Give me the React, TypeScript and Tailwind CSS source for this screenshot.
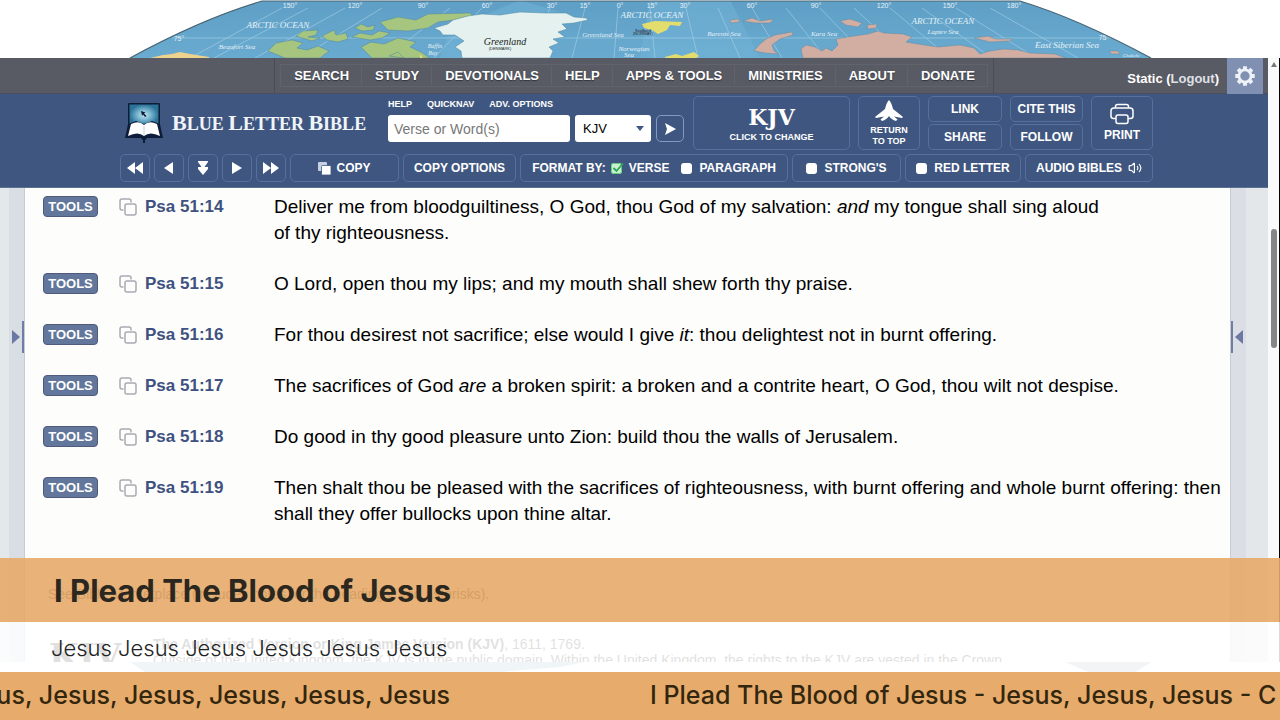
import { useState } from 'react';
import type { ReactNode } from 'react';
import { Volume2 } from 'lucide-react';

const NAV_ITEMS = ['SEARCH', 'STUDY', 'DEVOTIONALS', 'HELP', 'APPS & TOOLS', 'MINISTRIES', 'ABOUT', 'DONATE'];

interface Verse {
  id: string;
  text: ReactNode;
}

const VERSES: Verse[] = [
  {
    id: '51:14',
    text: (
      <>
        Deliver me from bloodguiltiness, O God, thou God of my salvation: <em>and</em> my tongue shall sing aloud
        <br />
        of thy righteousness.
      </>
    ),
  },
  { id: '51:15', text: 'O Lord, open thou my lips; and my mouth shall shew forth thy praise.' },
  {
    id: '51:16',
    text: (
      <>
        For thou desirest not sacrifice; else would I give <em>it</em>: thou delightest not in burnt offering.
      </>
    ),
  },
  {
    id: '51:17',
    text: (
      <>
        The sacrifices of God <em>are</em> a broken spirit: a broken and a contrite heart, O God, thou wilt not despise.
      </>
    ),
  },
  { id: '51:18', text: 'Do good in thy good pleasure unto Zion: build thou the walls of Jerusalem.' },
  {
    id: '51:19',
    text: 'Then shalt thou be pleased with the sacrifices of righteousness, with burnt offering and whole burnt offering: then shall they offer bullocks upon thine altar.',
  },
];

/* World map strip behind the page */
function WorldMap() {
  const lines = [
    'M282 8L190 58', 'M308 8L214 58', 'M345 8L255 58', 'M382 8L300 58', 'M450 8L385 58', 'M482 8L434 58',
    'M550 8L530 58', 'M585 8L572 58', 'M618 8L614 58', 'M650 8L655 58', 'M686 8L698 58', 'M718 8L740 58',
    'M752 8L782 58', 'M786 8L826 58', 'M820 8L868 58', 'M854 8L908 58', 'M890 8L950 58', 'M922 8L992 58',
    'M956 8L1036 58', 'M990 8L1078 58', 'M172 38H1110',
  ];
  const degrees: [number, string][] = [
    [290, '150°'], [355, '120°'], [423, '90°'], [487, '60°'], [552, '30°'], [585, '15°'], [620, '0°'],
    [652, '15°'], [685, '30°'], [752, '60°'], [816, '90°'], [884, '120°'], [950, '150°'], [1014, '180°'],
  ];

  return (
    <svg viewBox="0 0 1280 58" preserveAspectRatio="xMidYMin slice" className="block h-[58px] w-full shrink-0" aria-label="World map">
      <defs>
        <linearGradient id="sea" x1="0" x2="0" y1="0" y2="1">
          <stop offset="0" stopColor="#5f9fc6" />
          <stop offset="1" stopColor="#6aabd0" />
        </linearGradient>
        <clipPath id="globe">
          <path d="M130 58C172 35 215 15 262 1H1020C1066 15 1110 36 1151 58Z" />
        </clipPath>
      </defs>
      <g clipPath="url(#globe)">
        <rect width="1280" height="58" fill="url(#sea)" />
        <path d="M520 0L560 12L545 58H440L450 30Z M650 0H730L760 58H640Z" fill="#74b4d8" opacity=".5" />
        <g stroke="#a9d0e4" strokeWidth=".8" opacity=".75">
          {lines.map((d) => (
            <path key={d} d={d} />
          ))}
        </g>
        {/* Alaska */}
        <path d="M150 58L163 55L172 54L180 52L190 54L209 57V58Z" fill="#eed38c" />
        {/* Canadian islands */}
        <g fill="#a6c57f" stroke="#4f87a0" strokeWidth=".5">
          <path d="M268 51L276 43L292 40L303 43L297 48L307 50L318 46L329 51L320 58H285Z" />
          <path d="M296 36L303 31L318 30L316 35L308 37L320 38L312 41Z" />
          <path d="M322 36L334 30L336 35L346 33L348 39L338 42L327 40Z" />
          <path d="M355 28L361 24L368 27L375 25L373 30L362 31Z" />
          <path d="M352 37L360 33L372 35L379 31L390 33L382 38L370 40Z" />
          <path d="M361 47L371 42L384 44L398 38L416 42L410 47L421 52L430 58H372Z" />
          <path d="M380 22L398 17L416 20L428 14L470 13L473 16L455 20L438 22L428 28L408 31L388 30Z" />
          <path d="M389 56L398 52L404 58Z" />
        </g>
        {/* Greenland */}
        <path
          d="M434 28L448 24L453 20L468 16L482 14L500 15L520 12L545 13L566 13L574 17L586 18L588 20L574 23L562 24L567 29L558 32L565 37L553 39L559 43L549 47L553 51L550 58H462L461 51L455 47L464 41L455 35L443 35L440 31Z"
          fill="#e4f1ee"
          stroke="#4f87a0"
          strokeWidth=".5"
        />
        {/* Svalbard and Iceland */}
        <path d="M642 24L655 21L682 22L680 26L670 25L667 30L658 34L652 30L644 28Z" fill="#e3dd6d" />
        <path d="M665 57L676 54L682 56L694 52L699 56L696 58H665Z" fill="#e3dd6d" />
        <path d="M420 58V54L423 58Z" fill="#e3dd6d" />
        {/* Russian islands and Siberia */}
        <g fill="#d2ada2" stroke="#4f87a0" strokeWidth=".4">
          <path d="M730 20L738 19L740 22L731 23Z" />
          <path d="M743 21L752 18L760 21L774 19L770 23L756 23Z" />
          <path d="M754 51L759 45L766 39L775 35L792 32L793 35L780 39L772 45L774 51L779 54L765 53Z" />
          <path d="M840 21L850 19L862 23L858 27L846 25Z M867 25L877 24L876 28L868 29Z" />
          <path d="M801 49L806 45L815 47L822 51L826 48L832 51L838 45L836 39L854 36L868 34L878 31L884 33L903 34L912 37L906 42L918 44L938 47L960 45L974 48L980 54L990 51L1004 49L1018 50L1030 53L1055 54L1066 58H803Z" />
          <path d="M974 38L988 36L996 39L1012 39L1010 41L990 42Z M1109 51L1118 51L1120 54L1112 54Z" />
        </g>
        <g fill="#e4f1f6" fontFamily="Liberation Sans" fontSize="7" textAnchor="middle">
          {degrees.map(([x, label]) => (
            <text key={x} x={x} y="8">
              {label}
            </text>
          ))}
          <text x="179" y="41">75°</text>
          <text x="1104" y="40">75°</text>
        </g>
        <g fill="#e4f1f6" fontFamily="Liberation Serif" fontStyle="italic" textAnchor="middle">
          <text x="278" y="28" fontSize="9">ARCTIC  OCEAN</text>
          <text x="237" y="49" fontSize="7">Beaufort Sea</text>
          <text x="435" y="48" fontSize="6">Baffin</text>
          <text x="433" y="55" fontSize="6">Bay</text>
          <text x="603" y="37" fontSize="7">Greenland  Sea</text>
          <text x="634" y="51" fontSize="7">Norwegian</text>
          <text x="629" y="57" fontSize="7">Sea</text>
          <text x="652" y="18" fontSize="9">ARCTIC  OCEAN</text>
          <text x="724" y="36" fontSize="7">Barents Sea</text>
          <text x="824" y="36" fontSize="7">Kara Sea</text>
          <text x="943" y="24" fontSize="9">ARCTIC  OCEAN</text>
          <text x="943" y="34" fontSize="7">Laptev Sea</text>
          <text x="1067" y="48" fontSize="9">East Siberian Sea</text>
          <text x="1131" y="57" fontSize="5">Chukchi</text>
        </g>
        <g fill="#222" textAnchor="middle">
          <text x="505" y="45" fontSize="10" fontFamily="Liberation Serif" fontStyle="italic">Greenland</text>
          <text x="500" y="50" fontSize="4" fontFamily="Liberation Sans">(DENMARK)</text>
          <text x="643" y="32" fontSize="4" fontFamily="Liberation Sans">Svalbard</text>
          <text x="643" y="35" fontSize="4" fontFamily="Liberation Sans">(NORWAY)</text>
        </g>
      </g>
      <path d="M130 58C172 35 215 15 262 1H1020C1066 15 1110 36 1151 58" fill="none" stroke="#4a6675" strokeWidth="1.2" />
    </svg>
  );
}

function GearIcon() {
  return (
    <svg viewBox="0 0 24 24" className="h-[22px] w-[22px]" fill="none" stroke="#eef1f6">
      <circle cx="12" cy="12" r="6.6" strokeWidth="3" />
      <g strokeWidth="4.4">
        {[0, 45, 90, 135, 180, 225, 270, 315].map((a) => (
          <path key={a} d="M12 4.6V1.4" transform={`rotate(${a} 12 12)`} />
        ))}
      </g>
    </svg>
  );
}

function BibleLogo() {
  return (
    <svg viewBox="0 0 40 42" className="h-[42px] w-10" aria-hidden="true">
      <defs>
        <radialGradient id="screen">
          <stop offset="0" stopColor="#c4e6f0" />
          <stop offset=".5" stopColor="#74b3cd" />
          <stop offset="1" stopColor="#2c7198" />
        </radialGradient>
      </defs>
      <rect x="4" y="1" width="32" height="24" rx="1" fill="#0d1c38" />
      <rect x="5.5" y="2.5" width="29" height="21" fill="url(#screen)" />
      <path d="M17 9l4.500 1.500-1.500 1 2.500 2.500-1.500 1-2-2.500-1 1.500z" fill="#0d1c38" />
      <path d="M4 22L1 36L17 36Q18 38 19 38V41H21V38Q22 38 23 36L39 36L36 22L28 19L20 22L12 19Z" fill="#0d1c38" />
      <path d="M7 22Q15 18 20 23Q25 18 33 22L36 34Q26 29 20 34Q14 29 4 34Z" fill="#fff" />
      <path d="M20 24V33" stroke="#b5c6d2" strokeWidth=".8" />
    </svg>
  );
}

function PrinterIcon() {
  return (
    <svg viewBox="0 0 24 22" className="h-[22px] w-6" fill="none" stroke="#fff" strokeWidth="1.5" strokeLinejoin="round">
      <path d="M5.5 5V3.5Q5.5 1.5 7.5 1.5H16.5Q18.5 1.5 18.5 3.5V5" />
      <path d="M6 15.5H3.5Q1 15.5 1 13V8Q1 5 4 5H20Q23 5 23 8V13Q23 15.5 20.5 15.5H18" />
      <rect x="6" y="12" width="12" height="8.5" rx="2" />
    </svg>
  );
}

/* Double-square glyph used beside every verse */
function CopyOutline() {
  return (
    <svg viewBox="0 0 18 18" className="h-[18px] w-[18px]" fill="none" stroke="#a9abb2" strokeWidth="1.5">
      <path d="M4.5 12H3Q1 12 1 10V3Q1 1 3 1H10Q12 1 12 3V4.5" />
      <rect x="6" y="6" width="11" height="11" rx="2" />
    </svg>
  );
}

const BOX = 'flex items-center justify-center rounded-[5px] border border-[#55709c] hover:bg-[#4a648f]';

function ArrowButton({ label, path }: { label: string; path: string }) {
  return (
    <button aria-label={label} className={`${BOX} w-[30px]`}>
      <svg viewBox="0 0 16 14" className="h-[14px] w-4" fill="#fff">
        <path d={path} />
      </svg>
    </button>
  );
}

function CheckOption({ label, checked, onChange }: { label: string; checked: boolean; onChange: () => void }) {
  return (
    <label className="flex items-center gap-[7px]">
      <span className="relative flex">
        <input
          type="checkbox"
          checked={checked}
          onChange={onChange}
          className="h-[11px] w-[11px] appearance-none rounded-[3px] bg-white checked:bg-[#c9f2d0]"
        />
        {checked && (
          <svg viewBox="0 0 13 12" className="pointer-events-none absolute -top-px left-0 h-3 w-[13px]" fill="none">
            <rect x=".5" y="1.5" width="10" height="10" rx="2" stroke="#5fd07c" />
            <path d="M2.5 6L5.5 9L12 1.5" stroke="#2fa653" strokeWidth="1.8" />
          </svg>
        )}
      </span>
      {label}
    </label>
  );
}

function TopNav() {
  return (
    <nav className="relative flex h-9 shrink-0 justify-center border-b border-[#4b4f5c] bg-[#585a64]">
      <div className="border-x border-[#4a4c56] px-[5px] py-[6px]">
        <ul className="flex h-[23px] items-center border border-[#60626c] text-[13px] font-bold text-white">
          {NAV_ITEMS.map((item) => (
            <li key={item} className="border-l border-[#60626c] pr-3 pl-[13px] first:border-l-0">
              <a href="#" className="[text-shadow:0_1px_1px_#33353d]">{item}</a>
            </li>
          ))}
        </ul>
      </div>
      <div className="absolute inset-y-0 right-[5px] flex">
        <p className="pt-[13px] pr-2 text-[13px] leading-4 font-bold text-white">
          Static (<a href="#" className="text-[#dfe1e6]">Logout</a>)
        </p>
        <button aria-label="Settings" className="flex h-9 w-9 items-center justify-center bg-[#8090b3]">
          <GearIcon />
        </button>
      </div>
    </nav>
  );
}

function ToolHeader() {
  const [format, setFormat] = useState('verse');
  const [strongs, setStrongs] = useState(false);
  const [redLetter, setRedLetter] = useState(false);

  return (
    <header className="flex h-[94px] shrink-0 justify-center border-b border-[#5c6f92] bg-[#3f5780] pt-[2px] pl-[5px] text-xs font-bold text-white">
      <div className="w-[1033px]">
        <div className="flex h-[54px] gap-2">
          <a href="#" className="flex w-[260px] items-center gap-2 pl-1">
            <BibleLogo />
            <span className="font-['Liberation_Serif',serif] text-[18px] whitespace-nowrap text-[#f1f5fa]">
              <span className="text-[22px]">B</span>LUE <span className="text-[22px]">L</span>ETTER{' '}
              <span className="text-[22px]">B</span>IBLE
            </span>
          </a>
          <form className="w-[297px]" onSubmit={(e) => e.preventDefault()}>
            <div className="flex gap-[15px] pt-[2px] pb-[5px] text-[9px] leading-3">
              <a href="#">HELP</a>
              <a href="#">QUICKNAV</a>
              <a href="#">ADV. OPTIONS</a>
            </div>
            <div className="flex gap-[5px]">
              <input
                aria-label="Verse or Word(s)"
                placeholder="Verse or Word(s)"
                className="h-[27px] w-[182px] rounded-[3px] bg-white px-[6px] text-[14px] font-normal text-black placeholder:text-[#777]"
              />
              <div className="relative">
                <select aria-label="Translation" className="h-[27px] w-[76px] appearance-none rounded-[3px] bg-white px-2 text-[13px] font-normal text-black">
                  <option>KJV</option>
                </select>
                <svg viewBox="0 0 8 5" className="pointer-events-none absolute top-[11px] right-[7px] h-[5px] w-2" fill="#41568a">
                  <path d="M0 0H8L4 5Z" />
                </svg>
              </div>
              <button aria-label="Go" className="flex h-[27px] w-7 items-center justify-center rounded-[5px] border border-[#8398c4]">
                <svg viewBox="0 0 11 12" className="h-3 w-[11px]" fill="#fff">
                  <path d="M0 0L11 6L0 12L2 6Z" />
                </svg>
              </button>
            </div>
          </form>
          <button className={`${BOX} w-[157px] flex-col pt-[3px]`}>
            <span className="font-['DejaVu_Serif',serif] text-[22px] leading-6">KJV</span>
            <span className="text-[9px] leading-4">CLICK TO CHANGE</span>
          </button>
          <button className={`${BOX} w-[62px] flex-col text-[9px] leading-[11px]`}>
            <svg viewBox="0 0 28 21" className="mb-1 h-[21px] w-7" fill="#fff">
              <path d="M14 0C16 2 17 5 18 9L28 17L27 18L19 16.500L22.500 19.500L21 21C18 20 15.500 18.500 14 16C12.500 18.500 10 20 7 21L5.500 19.500L9 16.500L1 18L0 17L10 9C11 5 12 2 14 0Z" />
            </svg>
            RETURN
            <br />
            TO TOP
          </button>
          <div className="flex w-[74px] flex-col gap-[2px]">
            <button className={`${BOX} flex-1`}>LINK</button>
            <button className={`${BOX} flex-1`}>SHARE</button>
          </div>
          <div className="flex w-[73px] flex-col gap-[2px]">
            <button className={`${BOX} flex-1`}>CITE THIS</button>
            <button className={`${BOX} flex-1`}>FOLLOW</button>
          </div>
          <button className={`${BOX} w-[62px] flex-col gap-[2px]`}>
            <PrinterIcon />
            PRINT
          </button>
        </div>

        <div className="mt-1 flex h-7 gap-1">
          <ArrowButton label="First chapter" path="M8 1V13L0 7ZM16 1V13L8 7Z" />
          <ArrowButton label="Previous chapter" path="M12 1V13L3 7Z" />
          <ArrowButton label="Scroll down" path="M3 0H13V1L9.500 6H13V8L8 14L3 8V6H6.500L3 1Z" />
          <ArrowButton label="Next chapter" path="M3 1V13L13 7Z" />
          <ArrowButton label="Last chapter" path="M0 1V13L8 7ZM8 1V13L16 7Z" />
          <button className={`${BOX} w-[109px] gap-[5px]`}>
            <svg viewBox="0 0 13 13" className="h-[13px] w-[13px]">
              <rect width="9" height="9" rx="1" fill="#c6d0e2" />
              <rect x="3.5" y="3.5" width="9.5" height="9.5" rx="1" fill="#fff" stroke="#3f5780" strokeWidth=".8" />
            </svg>
            COPY
          </button>
          <button className={`${BOX} w-[113px]`}>COPY OPTIONS</button>
          <fieldset className={`${BOX} w-[268px] gap-3`}>
            <div className="flex items-center gap-[5px]">
              <span>FORMAT BY:</span>
              <CheckOption label="VERSE" checked={format === 'verse'} onChange={() => setFormat('verse')} />
            </div>
            <CheckOption label="PARAGRAPH" checked={format === 'paragraph'} onChange={() => setFormat('paragraph')} />
          </fieldset>
          <div className={`${BOX} w-[109px]`}>
            <CheckOption label="STRONG'S" checked={strongs} onChange={() => setStrongs(!strongs)} />
          </div>
          <div className={`${BOX} w-[116px]`}>
            <CheckOption label="RED LETTER" checked={redLetter} onChange={() => setRedLetter(!redLetter)} />
          </div>
          <button className={`${BOX} w-[128px] gap-[6px]`}>
            AUDIO BIBLES
            <Volume2 className="h-[14px] w-[14px]" strokeWidth={2} />
          </button>
        </div>
      </div>
    </header>
  );
}

function PanelHandle({ side }: { side: 'left' | 'right' }) {
  return (
    <button
      aria-label={`Open ${side} panel`}
      className={`absolute top-[133px] flex h-8 w-3 items-center ${
        side === 'left' ? 'right-0 justify-start border-r-2 border-[#6f7ea5]' : 'left-0 justify-end border-l-2 border-[#6f7ea5]'
      }`}
    >
      <svg viewBox="0 0 8 14" className="h-[14px] w-2" fill="#6b78a3">
        <path d={side === 'left' ? 'M0 0V14L8 7Z' : 'M8 0V14L0 7Z'} />
      </svg>
    </button>
  );
}

function VerseRow({ verse }: { verse: Verse }) {
  return (
    <li className="flex items-start">
      <button className="mt-[2px] h-[21px] w-[55px] shrink-0 rounded-[4px] border border-[#505b7c] bg-[#62779b] text-[13px] leading-[19px] font-bold text-white">
        TOOLS
      </button>
      <button aria-label={`Copy Psa ${verse.id}`} className="mt-1 ml-[21px] shrink-0">
        <CopyOutline />
      </button>
      <a href="#" className="ml-2 w-[129px] shrink-0 text-[17px] leading-[26px] font-bold text-[#3e5180]">
        Psa {verse.id}
      </a>
      <p className="text-[19px] leading-[26px] text-black">{verse.text}</p>
    </li>
  );
}

function Reader() {
  return (
    <main className="flex min-h-0 flex-1">
      <div className="flex w-6 shrink-0 bg-[#e3e8ea]">
        <div className="relative ml-[9px] flex-1 bg-[#d9dee4]">
          <PanelHandle side="left" />
        </div>
      </div>
      <article className="min-w-0 flex-1 overflow-hidden border-x border-[#c6ccd4] bg-[#fdfdfc] pt-[6px] pr-1 pl-[18px]">
        <ul className="space-y-[25px]">
          {VERSES.map((v) => (
            <VerseRow key={v.id} verse={v} />
          ))}
        </ul>
        <p className="mt-[59px] pl-[5px] text-[14px] leading-4 text-[#333]">
          See Bible Marketplace (includes notes for the headings, and asterisks).
        </p>
        <div className="mt-[34px] flex text-[14px] text-[#333]">
          <span className="w-[110px] pl-[6px] font-['DejaVu_Serif',serif] text-[34px] leading-10 font-bold">KJV</span>
          <p className="leading-4 whitespace-nowrap">
            <b>The Authorized Version or King James Version (KJV)</b>, 1611, 1769.
            <br />
            Outside of the United Kingdom, the KJV is in the public domain. Within the United Kingdom, the rights to the KJV are vested in the Crown
          </p>
        </div>
      </article>
      <div className="w-[37px] shrink-0 bg-[#e3e7ea]">
        <div className="relative h-full w-[15px] bg-[#dbdfe5]">
          <PanelHandle side="right" />
        </div>
      </div>
    </main>
  );
}

function Scrollbar() {
  return (
    <div className="flex w-3 shrink-0 flex-col items-center border-r border-black bg-[#fafafa] pt-1">
      <svg viewBox="0 0 6 5" className="h-[5px] w-[6px]" fill="#777">
        <path d="M3 0L6 5H0Z" />
      </svg>
      <div className="mt-[162px] h-[119px] w-[6px] rounded-full bg-[#858585]" />
    </div>
  );
}

export default function App() {
  return (
    <div className="relative flex h-screen flex-col overflow-hidden bg-white font-['Liberation_Sans',Arial,sans-serif]">
      <WorldMap />
      <div className="flex min-h-0 flex-1">
        <div className="flex min-w-0 flex-1 flex-col">
          <TopNav />
          <ToolHeader />
          <Reader />
        </div>
        <Scrollbar />
      </div>
      {/* Southern edge of the map */}
      <svg viewBox="0 0 1280 10" preserveAspectRatio="none" className="block h-[10px] w-full shrink-0">
        <path d="M130 0H585L560 5L500 10H145Z" fill="#9cc0cf" />
        <path d="M1065 0H1152L1135 10H1088Z" fill="#a9b8c4" />
      </svg>

      {/* Lower-third lyrics, laid over the page */}
      <section className="absolute inset-x-0 bottom-12 font-['Inter',sans-serif]">
        <h1 className="h-16 bg-[#e6aa69]/90 pl-[54px] text-[31px] leading-[66px] font-bold whitespace-nowrap text-[#2b271f]">
          I Plead The Blood of Jesus
        </h1>
        <p className="h-[50px] bg-white/85 pl-[51px] text-[22px] leading-[52px] font-light whitespace-nowrap text-[#222]">
          Jesus Jesus Jesus Jesus Jesus Jesus
        </p>
      </section>
      <footer className="flex h-12 shrink-0 gap-[200px] overflow-hidden bg-[#e7ac6b] font-['Inter',sans-serif] text-[25px] leading-[46px] font-medium whitespace-nowrap text-[#33260f]">
        <div className="flex w-[450px] shrink-0 justify-end">
          <span>Jesus, Jesus, Jesus, Jesus, Jesus, Jesus</span>
        </div>
        <span>I Plead The Blood of Jesus - Jesus, Jesus, Jesus - C</span>
      </footer>
    </div>
  );
}
